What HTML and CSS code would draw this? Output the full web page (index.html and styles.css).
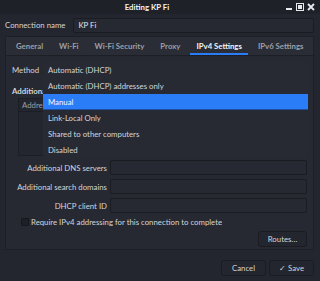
FILE: index.html
```html
<!DOCTYPE html>
<html lang="en">
<head>
	<meta charset="UTF-8">
	<title>Editing KP Fi</title>
	<link rel="stylesheet" href="styles.css">
</head>
<body>
<div class="window">
	<header class="titlebar">
		<span class="title">Editing KP Fi</span>
		<div class="winbtns">
			<svg width="8" height="8" viewBox="0 0 8 8"><rect x="1" y="5" width="6" height="2" fill="#e8e9ec"/></svg>
			<svg width="8" height="8" viewBox="0 0 8 8"><rect x="0.5" y="0.5" width="7" height="7" fill="none" stroke="#e8e9ec"/><rect x="2" y="2" width="4" height="4" fill="#e8e9ec"/></svg>
			<svg width="8" height="8" viewBox="0 0 8 8"><path d="M1 1 L7 7 M7 1 L1 7" stroke="#e8e9ec" stroke-width="1.8"/></svg>
		</div>
	</header>

	<div class="namerow">
		<span class="lbl">Connection name</span>
		<div class="entry">KP Fi</div>
	</div>

	<div class="notebook">
		<nav class="tabs">
			<span class="tab">General</span>
			<span class="tab">Wi-Fi</span>
			<span class="tab">Wi-Fi Security</span>
			<span class="tab">Proxy</span>
			<span class="tab active">IPv4 Settings</span>
			<span class="tab">IPv6 Settings</span>
		</nav>
		<section class="page">
			<div class="method-row">
				<span>Method</span>
				<div class="combo"></div>
			</div>
			<div class="addr-title">Additional static addresses</div>
			<div class="addr-box">
				<div class="addr-head">Address</div>
			</div>
			<div class="form-grid">
				<span class="lbl">Additional DNS servers</span>
				<div class="entry"></div>
				<span class="lbl">Additional search domains</span>
				<div class="entry"></div>
				<span class="lbl">DHCP client ID</span>
				<div class="entry"></div>
			</div>
			<label class="check">
				<span class="box"></span>
				<span>Require IPv4 addressing for this connection to complete</span>
			</label>
			<div class="routes-row">
				<button class="btn">Routes…</button>
			</div>
		</section>
	</div>

	<footer class="actions">
		<button class="btn wide">Cancel</button>
		<button class="btn wide">&#10003; Save</button>
	</footer>

	<!-- open dropdown of the Method combo -->
	<ul class="popup">
		<li>Automatic (DHCP)</li>
		<li>Automatic (DHCP) addresses only</li>
		<li class="sel">Manual</li>
		<li>Link-Local Only</li>
		<li>Shared to other computers</li>
		<li>Disabled</li>
	</ul>
</div>
</body>
</html>
```
FILE: styles.css
```css
html, body {
	margin: 0;
	padding: 0;
	background: #23262e;
}
.window {
	position: relative;
	width: 320px;
	height: 281px;
	background: #23262e;
	color: #d3d5da;
	font-family: Lato, "Noto Sans", sans-serif;
	font-size: 7.8px;
	white-space: nowrap;
	overflow: hidden;
}
.titlebar {
	height: 14px;
	background: #1f2128;
	display: flex;
	align-items: center;
	justify-content: center;
	position: relative;
}
.title {
	color: #f2f3f5;
	font-weight: bold;
	margin-left: -26px;
}
.winbtns {
	position: absolute;
	right: 5px;
	top: 3px;
	display: flex;
	gap: 3px;
}
.namerow {
	display: flex;
	align-items: center;
	padding: 3px 6px 0 5px;
	gap: 8px;
	height: 16px;
}
.entry {
	flex: 1;
	height: 13px;
	background: #262932;
	border: 1px solid #1a1c22;
	border-radius: 2px;
	display: flex;
	align-items: center;
	padding-left: 4px;
	color: #e6e7ea;
}
.notebook {
	margin: 3px 6px 0 5px;
}
.tabs {
	height: 19px;
	background: #2a2d36;
	display: flex;
	align-items: center;
	padding-left: 10px;
	gap: 16px;
	border: 1px solid #1d1f26;
	border-bottom: none;
	box-sizing: border-box;
}
.tab {
	color: #9c9fa6;
	font-weight: bold;
	height: 18px;
	line-height: 18px;
	position: relative;
}
.tab.active {
	color: #f2f3f5;
}
.tab.active::after {
	content: "";
	position: absolute;
	left: -6px;
	right: -6px;
	bottom: 0;
	height: 2px;
	background: #2b7cf7;
}
.page {
	height: 195px;
	box-sizing: border-box;
	background: #262932;
	border: 1px solid #1d1f26;
	padding: 6px 6px 0 6px;
}
.method-row {
	display: flex;
	align-items: center;
	gap: 8px;
	height: 15px;
}
.combo {
	flex: 1;
}
.addr-title {
	font-weight: bold;
	margin-top: 7px;
	height: 14px;
	line-height: 14px;
}
.addr-box {
	margin: 0 0 0 6px;
	height: 56px;
	border: 1px solid #1c1e25;
	background: #23262e;
}
.addr-head {
	height: 12px;
	line-height: 12px;
	padding-left: 3px;
	color: #9c9fa6;
	border-bottom: 1px solid #1c1e25;
}
.form-grid {
	display: grid;
	grid-template-columns: 95px 1fr;
	column-gap: 3px;
	row-gap: 4px;
	margin-top: 4px;
	align-items: center;
}
.form-grid .lbl {
	text-align: right;
}
.check {
	display: flex;
	align-items: center;
	gap: 2px;
	margin: 4px 0 0 9px;
	height: 9px;
}
.box {
	width: 6px;
	height: 6px;
	background: #1e2027;
	border: 1px solid #15171c;
	border-radius: 1px;
}
.routes-row {
	display: flex;
	justify-content: flex-end;
	margin-top: 5px;
}
.btn {
	font-family: inherit;
	font-size: 7.8px;
	color: #d3d5da;
	background: #23262e;
	border: 1px solid #1a1c22;
	border-radius: 3px;
	height: 16px;
	width: 49px;
	padding: 0;
}
.actions {
	display: flex;
	justify-content: flex-end;
	gap: 3px;
	padding: 10px 6px 0 0;
}
.actions .wide {
	width: 45px;
}
.popup {
	position: absolute;
	left: 43px;
	top: 62px;
	width: 265px;
	margin: 0;
	padding: 0;
	list-style: none;
	background: #272a33;
}
.popup li {
	height: 16px;
	line-height: 16px;
	padding-left: 5px;
}
.popup li.sel {
	background: #2b7cf7;
	color: #f4f6fa;
	box-shadow: inset 0 -1px 0 #1e4f9e;
}
```
